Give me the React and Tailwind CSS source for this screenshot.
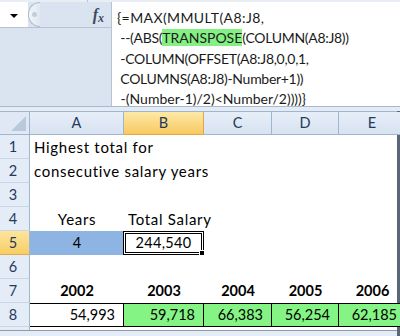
import React from "react";

const cols = [
  { key: "A", w: "w-[94px]" },
  { key: "B", w: "w-[80px]" },
  { key: "C", w: "w-[68px]" },
  { key: "D", w: "w-[67px]" },
  { key: "E", w: "w-[67px]" },
];

const years = ["2002", "2003", "2004", "2005", "2006"];
const totals = ["54,993", "59,718", "66,383", "56,254", "62,185"];

const RowHeader = ({ n, active }) => (
  <div
    className={`w-[30px] shrink-0 h-full flex items-center justify-center pr-[3px] border-r border-[#9eb6ce] text-[#1f3a5c] ${
      active
        ? "bg-gradient-to-b from-[#fde59d] to-[#f8cd63] border-b border-b-[#e1ad4a]"
        : "bg-[#e4ecf7] border-b border-b-[#c9d6e6]"
    }`}
  >
    {n}
  </div>
);

const App = () => {
  return (
    <div className="w-[400px] h-[336px] overflow-hidden bg-white font-['Lato',sans-serif] text-[14.5px] text-black">
      {/* formula bar */}
      <div className="h-[111px] flex flex-col bg-[#e4ebf4]">
        <div className="h-[2px] bg-[#e9eef4] flex">
          <div className="w-[88px] border-r border-[#b6c3d3]" />
        </div>
        <div className="flex h-[105px] border-b border-[#a9b8ca]">
          <div className="w-[112px] shrink-0 flex flex-col bg-[#dae4f0] border-r border-[#b6c3d3]">
            <div className="h-[26px] flex border-b border-[#b6c3d3]">
              <div className="w-[28px] bg-white flex items-center justify-center">
                <div className="w-0 h-0 border-l-[4px] border-r-[4px] border-t-[4px] border-l-transparent border-r-transparent border-t-black mt-[2px]" />
              </div>
              <div className="w-[12px] h-full rounded-l-full border-l border-y border-[#aebdcf] bg-gradient-to-r from-[#f2f5f9] to-[#dfe7f1] flex items-center justify-center">
                <div className="w-[5px] h-[5px] rounded-full bg-[#c3cedb]" />
              </div>
              <div className="flex-1 flex items-center justify-end pr-[7px]">
                <span className="font-['Liberation_Serif',serif] italic font-bold text-[16px] text-[#3c4b5e] leading-none">
                  f<span className="text-[12px] relative top-[2px]">x</span>
                </span>
              </div>
            </div>
            <div className="flex-1" />
          </div>
          <div className="flex-1 bg-white pl-[5px] pt-[6px] leading-[20.3px] text-[14px] text-[#1b1b1b] whitespace-pre">
            <div className="tracking-[0.4px]">{"{=MAX(MMULT(A8:J8,"}</div>
            <div className="tracking-[-0.3px]">
              {" --(ABS("}
              <span className="bg-[#84f084] tracking-normal">TRANSPOSE</span>
              {"(COLUMN(A8:J8))"}
            </div>
            <div className="tracking-[-0.3px]">{" -COLUMN(OFFSET(A8:J8,0,0,1,"}</div>
            <div className="tracking-[-0.3px]">{" COLUMNS(A8:J8)-Number+1))"}</div>
            <div>{" -(Number-1)/2)<Number/2))))}"}</div>
          </div>
        </div>
      </div>

      {/* sheet */}
      <div className="flex flex-col border-r-[3px] border-[#5b6777] h-[225px]">
        {/* column headers */}
        <div className="flex h-[24px] border-t border-[#9eb6ce] shrink-0">
          <div className="w-[30px] shrink-0 relative bg-[#dfe8f4] border-r border-b border-[#9eb6ce]">
            <div className="absolute right-[3px] bottom-[3px] w-0 h-0 border-b-[15px] border-l-[15px] border-b-[#b9c8da] border-l-transparent" />
          </div>
          {cols.map((c) => (
            <div
              key={c.key}
              className={`${c.w} shrink-0 flex items-center justify-center border-r border-b text-[#1f3a5c] ${
                c.key === "B"
                  ? "bg-gradient-to-b from-[#fde9a6] to-[#f7c95e] border-[#e1a848]"
                  : "bg-gradient-to-b from-[#e6eef8] to-[#d8e3f1] border-[#9eb6ce]"
              }`}
            >
              {c.key}
            </div>
          ))}
        </div>

        {/* row 1 */}
        <div className="flex h-[24px] shrink-0">
          <RowHeader n="1" />
          <div className="pl-[4px] flex items-center whitespace-nowrap text-[15px] tracking-[0.7px]">Highest total for</div>
        </div>
        {/* row 2 */}
        <div className="flex h-[24px] shrink-0">
          <RowHeader n="2" />
          <div className="pl-[4px] flex items-center whitespace-nowrap text-[15px] tracking-[0.7px]">consecutive salary years</div>
        </div>
        {/* row 3 */}
        <div className="flex h-[24px] shrink-0">
          <RowHeader n="3" />
        </div>
        {/* row 4 */}
        <div className="flex h-[24px] shrink-0">
          <RowHeader n="4" />
          <div className="w-[94px] shrink-0 flex items-center justify-center text-[15px] tracking-[0.7px]">Years</div>
          <div className="pl-[4px] flex items-center whitespace-nowrap text-[15px] tracking-[0.7px]">Total Salary</div>
        </div>
        {/* row 5 */}
        <div className="flex h-[24px] shrink-0">
          <RowHeader n="5" active />
          <div className="w-[94px] shrink-0 flex items-center justify-center bg-[#8db4e2]">4</div>
          <div className="w-[81px] shrink-0 -ml-[1px] relative border-[3px] border-double border-black flex items-center justify-center tracking-[0.3px]">
            244,540
            <div className="absolute -right-[4px] -bottom-[4px] w-[6px] h-[6px] bg-black border border-white" />
          </div>
        </div>
        {/* row 6 */}
        <div className="flex h-[24px] shrink-0">
          <RowHeader n="6" />
        </div>
        {/* row 7 */}
        <div className="flex h-[24px] shrink-0">
          <RowHeader n="7" />
          {cols.map((c, i) => (
            <div key={c.key} className={`${c.w} shrink-0 flex items-center justify-center font-bold`}>
              {years[i]}
            </div>
          ))}
        </div>
        {/* row 8 */}
        <div className="flex h-[24px] shrink-0">
          <RowHeader n="8" />
          {cols.map((c, i) => (
            <div
              key={c.key}
              className={`${c.w} shrink-0 flex items-center justify-end pr-[8px] border-y border-r border-black ${
                i > 0 ? "bg-[#84f584]" : "bg-white"
              }`}
            >
              {totals[i]}
            </div>
          ))}
        </div>
        {/* row 9 partial */}
        <div className="flex h-[4px] shrink-0 border-b border-[#8d9bab]">
          <div className="w-[30px] shrink-0 h-full bg-[#e4ecf7] border-r border-[#9eb6ce]" />
        </div>
        <div className="flex-1 bg-[#e4ecf7]" />
      </div>
    </div>
  );
};

export default App;
